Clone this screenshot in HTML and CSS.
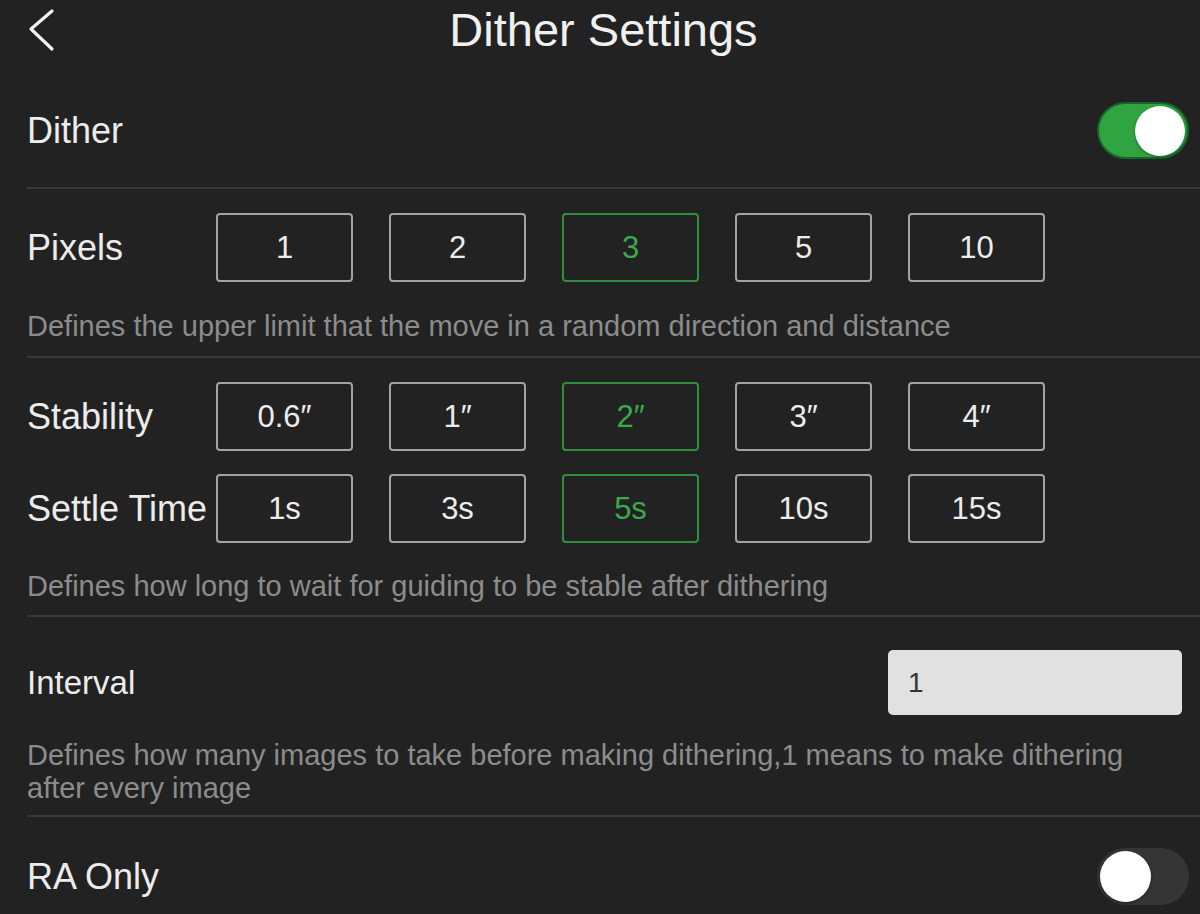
FILE: index.html
```html
<!DOCTYPE html>
<html>
<head>
<meta charset="utf-8">
<title>Dither Settings</title>
<link rel="stylesheet" href="styles.css">
</head>
<body>
<div class="page">
  <header class="header">
    <svg class="back" width="30" height="44" viewBox="0 0 30 44">
      <polyline points="25,3 4,21 25,41" fill="none" stroke="#f2f2f2" stroke-width="3.2" stroke-linecap="round" stroke-linejoin="round"/>
    </svg>
    <h1 class="title">Dither Settings</h1>
    <div></div>
  </header>

  <section class="group g-dither">
    <div class="row space">
      <span class="label">Dither</span>
      <div class="toggle on"><div class="knob"></div></div>
    </div>
  </section>

  <section class="group g-pixels">
    <div class="row">
      <span class="label col">Pixels</span>
      <div class="opts">
        <div class="opt">1</div>
        <div class="opt">2</div>
        <div class="opt sel">3</div>
        <div class="opt">5</div>
        <div class="opt">10</div>
      </div>
    </div>
    <p class="desc">Defines the upper limit that the move in a random direction and distance</p>
  </section>

  <section class="group g-stab">
    <div class="row">
      <span class="label col">Stability</span>
      <div class="opts">
        <div class="opt">0.6″</div>
        <div class="opt">1″</div>
        <div class="opt sel">2″</div>
        <div class="opt">3″</div>
        <div class="opt">4″</div>
      </div>
    </div>
    <div class="row row2">
      <span class="label col">Settle Time</span>
      <div class="opts">
        <div class="opt">1s</div>
        <div class="opt">3s</div>
        <div class="opt sel">5s</div>
        <div class="opt">10s</div>
        <div class="opt">15s</div>
      </div>
    </div>
    <p class="desc">Defines how long to wait for guiding to be stable after dithering</p>
  </section>

  <section class="group g-interval">
    <div class="row space">
      <span class="label small">Interval</span>
      <div class="input">1</div>
    </div>
    <p class="desc">Defines how many images to take before making dithering,1 means to make dithering<br>after every image</p>
  </section>

  <section class="group g-ra last">
    <div class="row space">
      <span class="label">RA Only</span>
      <div class="toggle off"><div class="knob"></div></div>
    </div>
  </section>
</div>
</body>
</html>
```

FILE: styles.css
```css
* { box-sizing: border-box; }
html, body {
  margin: 0;
  padding: 0;
  background: #222222;
}
body {
  width: 1200px;
  height: 914px;
  overflow: hidden;
  font-family: "Liberation Sans", Arial, Helvetica, sans-serif;
  color: #ececec;
}
.page {
  padding-left: 27px;
}
.header {
  display: grid;
  grid-template-columns: 1fr auto 1fr;
  height: 60px;
}
.back {
  display: block;
  margin-top: 8px;
  align-self: start;
}
.title {
  margin: 0;
  font-size: 47px;
  font-weight: normal;
  line-height: 60px;
  color: #f0f0f0;
  transform: translateX(-10px);
}
.group {
  border-bottom: 2px solid #383838;
}
.group.last { border-bottom: none; }
.row {
  display: flex;
  align-items: center;
}
.row.space { justify-content: space-between; }
.label {
  font-size: 36px;
  line-height: 40px;
  color: #ececec;
  white-space: nowrap;
}
.label.small { font-size: 33px; }
.label.col { width: 189px; flex: none; }
.opts {
  display: flex;
  gap: 36px;
}
.opt {
  width: 137px;
  height: 69px;
  border: 2px solid #a3a3a3;
  border-radius: 4px;
  display: flex;
  align-items: center;
  justify-content: center;
  font-size: 31px;
  color: #ececec;
}
.opt.sel {
  border-color: #2f8f3d;
  color: #3aaa4b;
}
.desc {
  margin: 0;
  font-size: 29px;
  line-height: 33px;
  color: #8c8c8c;
}
.g-dither {
  height: 129px;
  padding-top: 14px;
  padding-right: 11px;
}
.g-dither .row { height: 113px; }
.g-pixels {
  padding-top: 24px;
  padding-bottom: 13px;
}
.g-pixels .desc { margin-top: 28px; }
.g-stab {
  padding-top: 24px;
  padding-bottom: 12px;
}
.g-stab .row2 { margin-top: 23px; }
.g-stab .desc { margin-top: 27px; }
.g-interval {
  padding-top: 33px;
  padding-bottom: 10px;
  padding-right: 18px;
}
.g-interval .desc { margin-top: 24px; }
.input {
  width: 294px;
  height: 65px;
  background: #e1e1e1;
  border-radius: 5px;
  display: flex;
  align-items: center;
  padding-left: 20px;
  font-size: 28px;
  color: #333333;
}
.g-ra {
  padding-top: 31px;
  padding-right: 11px;
}
.toggle {
  width: 92px;
  height: 57px;
  border-radius: 29px;
  display: flex;
  align-items: center;
  padding: 0 2px;
}
.toggle.on {
  background: #30a441;
  border: 2px solid #17632a;
  justify-content: flex-end;
}
.toggle.off {
  background: #353535;
  justify-content: flex-start;
  padding: 0 3px;
}
.knob {
  width: 50px;
  height: 50px;
  border-radius: 50%;
  background: #ffffff;
  box-shadow: 0 1px 3px rgba(0,0,0,0.4);
}
.toggle.off .knob { width: 51px; height: 51px; }
```
